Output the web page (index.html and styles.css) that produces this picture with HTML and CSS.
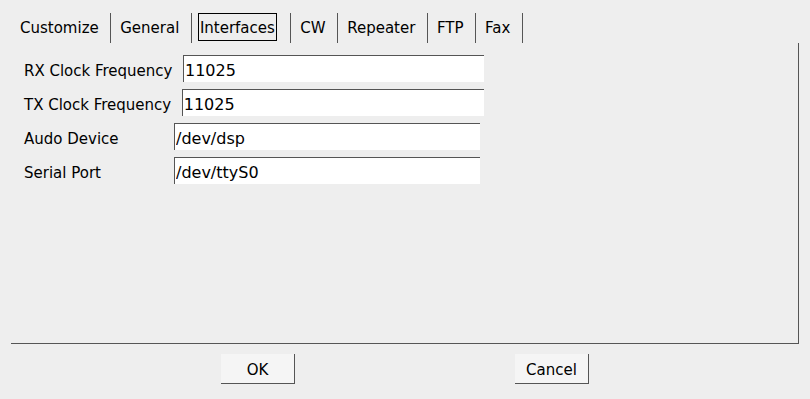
FILE: index.html
```html
<!DOCTYPE html>
<html lang="en">
<head>
    <meta charset="UTF-8">
    <title>Settings - Interfaces</title>
    <link rel="stylesheet" href="styles.css">
</head>
<body>
    <div class="tabs">
        <div class="tab"><span>Customize</span></div>
        <div class="tab"><span>General</span></div>
        <div class="tab active"><span>Interfaces</span></div>
        <div class="tab"><span>CW</span></div>
        <div class="tab"><span>Repeater</span></div>
        <div class="tab"><span>FTP</span></div>
        <div class="tab"><span>Fax</span></div>
    </div>

    <div class="panel">
        <div class="row">
            <label for="rxclock">RX Clock Frequency</label>
            <input type="text" id="rxclock" class="field field-rx" value="11025">
        </div>
        <div class="row">
            <label for="txclock">TX Clock Frequency</label>
            <input type="text" id="txclock" class="field field-tx" value="11025">
        </div>
        <div class="row">
            <label for="audio">Audo Device</label>
            <input type="text" id="audio" class="field" value="/dev/dsp">
        </div>
        <div class="row">
            <label for="serial">Serial Port</label>
            <input type="text" id="serial" class="field" value="/dev/ttyS0">
        </div>
    </div>

    <div class="buttons">
        <button type="button" class="btn">OK</button>
        <button type="button" class="btn">Cancel</button>
    </div>
</body>
</html>
```

FILE: styles.css
```css
* {
    margin: 0;
    padding: 0;
    box-sizing: border-box;
}

body {
    font-family: 'DejaVu Sans', 'Liberation Sans', sans-serif;
    font-size: 15px;
    line-height: 17px;
    color: #000;
    background: #eeeeee;
    padding: 13px 11px 0;
}

.tabs {
    display: flex;
    height: 30px;
}

.tab {
    padding: 0 9.5px 0 7px;
    border-right: 1px solid #555;
}

.tab span {
    display: block;
    padding: 6px 1px 3px;
    border: 1px solid transparent;
}

.tab.active span {
    border-color: #000;
    margin-left: -1px;
    margin-right: 4px;
}

.panel {
    height: 301px;
    border-right: 1px solid #555;
    border-bottom: 1px solid #555;
    padding: 12px 13px 0;
}

.row {
    display: flex;
    align-items: baseline;
    margin-bottom: 7px;
}

.row label {
    min-width: 150px;
    padding-right: 10.5px;
}

.field {
    width: 306px;
    height: 27px;
    padding: 3px 1px 0;
    font-family: inherit;
    font-size: 16px;
    line-height: 18px;
    color: #000;
    background: #fff;
    border: none;
    border-top: 1px solid #555;
    border-left: 1px solid #555;
    outline: none;
}

.field-rx {
    width: 301px;
}

.field-tx {
    width: 302px;
}

.buttons {
    display: flex;
    justify-content: center;
    gap: 220px;
    margin-top: 10px;
}

.btn {
    width: 74px;
    height: 30px;
    padding: 8px 0 4px;
    font-family: inherit;
    font-size: 15px;
    line-height: 17px;
    color: #000;
    background: #f5f5f5;
    border: none;
    border-right: 1px solid #555;
    border-bottom: 1px solid #555;
}
```
